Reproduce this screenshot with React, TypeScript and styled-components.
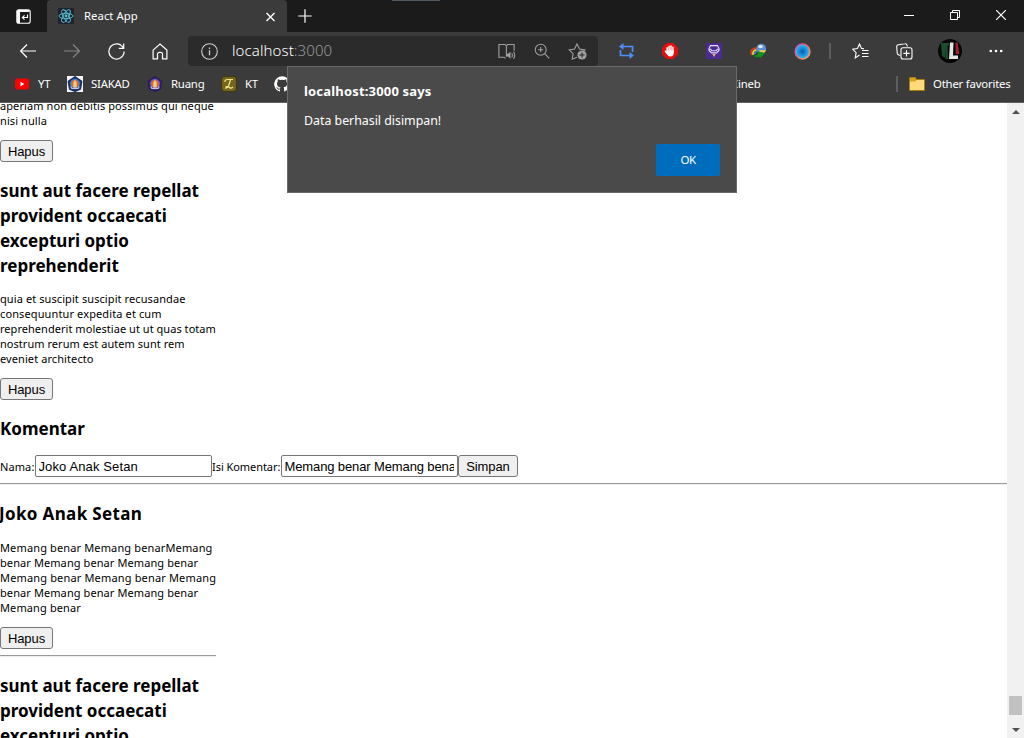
import React from 'react';
import styled, { createGlobalStyle } from 'styled-components';

const ui = '"Noto Sans", "Open Sans", sans-serif';
const control = '"Liberation Sans", Arial, sans-serif';

const GlobalStyle = createGlobalStyle`
  * { box-sizing: border-box; }
  body { margin: 0; overflow: hidden; background: #fff; }
  svg { flex: none; }
`;

const Window = styled.div`
  position: relative;
  display: flex;
  flex-direction: column;
  width: 1024px;
  height: 738px;
  overflow: hidden;
  font-family: ${ui};
`;

/* ---- title bar ---- */

const TitleBar = styled.div`
  display: flex;
  height: 32px;
  flex: none;
  background: #1b1b1b;
  color: #fff;
`;

const TabActions = styled.div`
  width: 47px;
  display: flex;
  align-items: center;
  justify-content: center;
`;

const Tab = styled.div`
  width: 240px;
  display: flex;
  align-items: center;
  padding: 0 9px 0 11px;
  background: #3b3b3b;
  border-radius: 4px 4px 0 0;
`;

const TabTitle = styled.span`
  flex: 1;
  margin-left: 10px;
  padding-bottom: 2px;
  font-size: 11.3px;
  letter-spacing: 0.05px;
`;

const NewTab = styled.div`
  width: 36px;
  display: flex;
  align-items: center;
  justify-content: center;
`;

const TitleSpace = styled.div`
  flex: 1;
  display: flex;
  padding-left: 69px;
`;

const LoadingSliver = styled.div`
  width: 48px;
  height: 1px;
  background: #4d5a62;
`;

const CaptionButton = styled.div`
  width: 46px;
  height: 29px;
  display: flex;
  align-items: center;
  justify-content: center;
`;

/* ---- toolbar ---- */

const Toolbar = styled.div`
  display: flex;
  align-items: center;
  height: 38px;
  flex: none;
  padding-left: 6px;
  background: #3b3b3b;
`;

const ToolButton = styled.div<{ $shift?: number }>`
  width: 44px;
  height: 30px;
  display: flex;
  align-items: center;
  justify-content: center;
  padding-left: ${(p) => p.$shift ?? 0}px;
`;

const AddressBar = styled.div`
  display: flex;
  align-items: center;
  width: 410px;
  height: 30px;
  margin: 0 6px;
  padding: 0 10px 0 13px;
  background: #2b2b2b;
  border-radius: 4px;
`;

const Url = styled.div`
  flex: 1;
  margin-left: 14px;
  padding-bottom: 2px;
  color: #fff;
  font-size: 15px;
  font-weight: 300;
  letter-spacing: 0.1px;
  line-height: 20px;
`;

const Port = styled.span`
  color: #9a9a9a;
`;

const AddressIcons = styled.div`
  display: flex;
  align-items: center;
  gap: 18px;
`;

const Divider = styled.div<{ $margin: string }>`
  flex: none;
  width: 2px;
  height: 16px;
  margin: ${(p) => p.$margin};
  background: #5e5e5e;
`;

/* ---- favorites bar ---- */

const FavoritesBar = styled.div`
  display: flex;
  align-items: center;
  height: 33px;
  flex: none;
  padding: 0 14px 4px;
  background: #3b3b3b;
  border-bottom: 1px solid #606060;
  color: #fff;
`;

const Favorite = styled.div<{ $width: number }>`
  flex: none;
  display: flex;
  align-items: center;
  gap: 8px;
  width: ${(p) => p.$width}px;
`;

const FavoriteName = styled.span`
  padding-bottom: 2px;
  font-size: 11.4px;
  letter-spacing: -0.22px;
  white-space: nowrap;
`;

/* ---- page ---- */

const Viewport = styled.div`
  flex: 1;
  min-height: 0;
  display: flex;
  background: #fff;
`;

const Page = styled.main`
  flex: 1;
  overflow: hidden;
  color: #000;
`;

const Post = styled.article<{ $pull?: number }>`
  width: 216px;
  margin-top: ${(p) => -(p.$pull ?? 0)}px;
`;

const Title = styled.h2<{ $gap?: number; $tracking?: number; $indent?: number }>`
  margin: 0;
  padding: 16px 0 ${(p) => p.$gap ?? 13}px;
  font-size: 17px;
  font-weight: 700;
  line-height: 25px;
  letter-spacing: ${(p) => p.$tracking ?? 0}px;
  text-indent: ${(p) => p.$indent ?? 0}px;
  white-space: nowrap;
`;

const Text = styled.p`
  margin: 0 0 12px;
  font-size: 11px;
  line-height: 15px;
`;

const Line = styled.span<{ $tracking?: number }>`
  display: block;
  white-space: nowrap;
  letter-spacing: ${(p) => p.$tracking ?? 0.09}px;
`;

const Button = styled.button<{ $width: number }>`
  display: block;
  width: ${(p) => p.$width}px;
  height: 22px;
  padding: 1px 0 0;
  border: 1px solid #767676;
  border-radius: 3px;
  background: #efefef;
  color: #000;
  font: 13px/18px ${control};
  letter-spacing: -0.1px;
`;

const Form = styled.form`
  display: flex;
  align-items: center;
  height: 22px;
`;

const Label = styled.label<{ $width: number; $tracking: number }>`
  width: ${(p) => p.$width}px;
  font-size: 11px;
  line-height: 15px;
  white-space: nowrap;
  letter-spacing: ${(p) => p.$tracking}px;
`;

const Input = styled.input<{ $tracking: number }>`
  width: 177px;
  height: 22px;
  margin: 0;
  padding: 1px 3px 1px 2.5px;
  border: 1px solid #767676;
  border-radius: 2px;
  background: #fff;
  color: #000;
  font: 13px/18px ${control};
  letter-spacing: ${(p) => p.$tracking}px;
  outline: none;
`;

const Rule = styled.hr<{ $top: number }>`
  height: 2px;
  margin: ${(p) => p.$top}px 0 0;
  border: 0;
  border-top: 1px solid #9a9a9a;
  border-bottom: 1px solid #eee;
`;

const ScrollTrack = styled.div`
  width: 17px;
  display: flex;
  flex-direction: column;
  align-items: center;
  background: #f1f1f1;
`;

const ScrollArrow = styled.div`
  height: 17px;
  display: flex;
  align-items: center;
`;

const ScrollSpace = styled.div`
  flex: 1;
`;

const ScrollThumb = styled.div`
  width: 13px;
  height: 19px;
  margin-bottom: 6px;
  background: #c1c1c1;
`;

/* ---- alert ---- */

const Dialog = styled.div`
  position: absolute;
  left: 287px;
  top: 66px;
  width: 450px;
  height: 127px;
  display: flex;
  flex-direction: column;
  padding: 14px 16px 16px;
  background: #4a4a4a;
  border: 1px solid #6a6a6a;
  color: #fff;
`;

const DialogTitle = styled.div`
  font-size: 13px;
  font-weight: 700;
  line-height: 20px;
  letter-spacing: 0.18px;
`;

const DialogText = styled.div`
  flex: 1;
  padding-top: 10px;
  font-size: 12.4px;
  line-height: 20px;
  letter-spacing: -0.02px;
`;

const DialogButton = styled.button`
  align-self: flex-end;
  width: 64px;
  height: 32px;
  padding: 0;
  border: 0;
  border-radius: 2px;
  background: #006cbe;
  color: #fff;
  font: 11.5px/32px ${ui};
  letter-spacing: -0.5px;
`;

/* ---- icons ---- */

type IconProps = { w?: number; h?: number; color?: string; sw?: number; children: React.ReactNode };
const Icon = ({ w = 16, h = 16, color = '#fff', sw = 1.1, children }: IconProps) => (
  <svg width={w} height={h} viewBox={`0 0 ${w} ${h}`} fill="none" stroke={color} strokeWidth={sw}>
    {children}
  </svg>
);

const TabActionsIcon = () => (
  <Icon w={15} h={15} sw={1.1}>
    <rect x="0.8" y="0.8" width="13.4" height="13.4" rx="2" />
    <path d="M1.5 2h12" strokeWidth="2" />
    <path d="M1 2h3v12H1z" fill="#fff" stroke="none" />
    <path d="M11.5 5.500v3H6.500M8.500 6.400L6.300 8.500l2.200 2.100" />
  </Icon>
);

const ReactIcon = () => (
  <Icon w={16} h={16} color="#58c4dc" sw={0.9}>
    <rect width="16" height="16" rx="1" fill="#20232a" stroke="none" />
    <circle cx="8" cy="8" r="1.4" fill="#58c4dc" stroke="none" />
    <ellipse cx="8" cy="8" rx="7" ry="2.7" />
    <ellipse cx="8" cy="8" rx="7" ry="2.7" transform="rotate(60 8 8)" />
    <ellipse cx="8" cy="8" rx="7" ry="2.7" transform="rotate(120 8 8)" />
  </Icon>
);

const Arrow = ({ color, flip }: { color: string; flip?: boolean }) => (
  <Icon w={16} h={14} color={color} sw={1.2}>
    <path d={flip ? 'M0 7h15.3M9 .5L15.4 7 9 13.5' : 'M16 7H.7M7 .5L.6 7 7 13.5'} />
  </Icon>
);

const Emblem = ({ boxed }: { boxed?: boolean }) => (
  <Icon>
    {boxed && <rect width="16" height="16" fill="#f4f4f4" stroke="none" />}
    <path
      d="M8 .8l6.600 4.700-1.300 7.500L8 15.300 2.700 13 1.400 5.500z"
      fill={boxed ? '#23468c' : '#43308a'}
      stroke={boxed ? '#183060' : '#2a1d5c'}
      strokeLinejoin="round"
      strokeWidth="1.6"
    />
    <circle cx="8" cy="7.800" r="4.300" fill="#e06a2c" stroke={boxed ? '#4a82c8' : '#7a5bc0'} />
    <path d="M8 3.800l1.500 2.700.3 5H6.200l.3-5z" fill="#e8cf8a" stroke="none" />
    <path d="M3.800 10.500l1 2h6.400l1-2" stroke="#c8c4dc" />
  </Icon>
);

export default function App() {
  return (
    <Window>
      <GlobalStyle />
      <TitleBar>
        <TabActions><TabActionsIcon /></TabActions>
        <Tab>
          <ReactIcon />
          <TabTitle>React App</TabTitle>
          <Icon w={15} h={15} sw={1.4}><path d="M3.5 4l8 8M11.5 4l-8 8" /></Icon>
        </Tab>
        <NewTab><Icon w={14} h={14} sw={1.2}><path d="M7 .3v13.4M.3 7h13.4" /></Icon></NewTab>
        <TitleSpace><LoadingSliver /></TitleSpace>
        <CaptionButton><Icon w={10} h={10} sw={1}><path d="M0 5.5h10" /></Icon></CaptionButton>
        <CaptionButton>
          <Icon w={10} h={10} sw={1}><path d="M.5 2.5h7v7h-7zM2.5 2.5v-2h7v7h-2" /></Icon>
        </CaptionButton>
        <CaptionButton><Icon w={10} h={10} sw={1.2}><path d="M0 0l10 10M10 0L0 10" /></Icon></CaptionButton>
      </TitleBar>

      <Toolbar>
        <ToolButton><Arrow color="#fff" /></ToolButton>
        <ToolButton><Arrow color="#858585" flip /></ToolButton>
        <ToolButton>
          <Icon w={17} h={17} sw={1.2}>
            <path d="M15.3 5A7.6 7.6 0 1 0 16.1 8.5M15.7 .5v4.9h-4.9" />
          </Icon>
        </ToolButton>
        <ToolButton>
          <Icon w={16} h={17} sw={1.2}>
            <path d="M1.100 7.100L8 1l6.900 6.100v8.800h-4.400v-4.600a2 2 0 0 0-2-2h-1a2 2 0 0 0-2 2v4.600H1.100z" />
          </Icon>
        </ToolButton>
        <AddressBar>
          <Icon w={17} h={17} color="#d0d0d0">
            <circle cx="8.5" cy="8.5" r="7.8" />
            <path d="M8.5 7.3v5M8.5 4.4v1.5" strokeWidth="1.3" />
          </Icon>
          <Url>localhost<Port>:3000</Port></Url>
          <AddressIcons>
            <Icon w={18} h={17} color="#a0a0a0">
              <path d="M7.500 15.300L6 14.300H.9V1.500h6.200L8.400 3v10.500M8.400 3l1.300-1.500h6.400v6.200" />
              <path d="M8 10.800h2l2.500-2.100v7L10 13.500H8z" fill="#a0a0a0" stroke="none" />
              <path d="M13.800 10.200q1.200 2 0 4M15.600 8.700q2.200 3.500 0 7" />
            </Icon>
            <Icon w={16} h={16} color="#a0a0a0">
              <circle cx="6.7" cy="6.7" r="5.5" />
              <path d="M10.600 10.600l4.700 4.700M6.700 4.100v5.200M4.100 6.700h5.200" />
            </Icon>
            <Icon w={20} h={18} color="#a0a0a0">
              <path d="M9 15.200l-4.800 2 .9-5.500-4-3.800 5.400-.8L9 2l2.500 5.100 5.400.8-1.200 1.200" />
              <circle cx="14" cy="13" r="4.6" fill="#a0a0a0" stroke="none" />
              <path d="M14 10.400v5.200M11.400 13h5.200" stroke="#2b2b2b" />
            </Icon>
          </AddressIcons>
        </AddressBar>

        <ToolButton>
          <Icon w={15} h={16} color="#4a90f5" sw={1.7}>
            <path d="M3 3.500h10.500v5.500M12 12.500H1.500V7" />
            <path d="M0 3.500L4.500 0v7zM15 12.500L10.500 9v7z" fill="#4a90f5" stroke="none" />
          </Icon>
        </ToolButton>
        <ToolButton>
          <Icon>
            <path d="M4.7 0h6.6L16 4.7v6.6L11.3 16H4.7L0 11.3V4.7z" fill="#e60f0f" stroke="none" />
            <path d="M5.2 9V4.800M7.100 8V3.200M9 8V3M10.900 9V4.300M4.800 10l-1.300-1.800" stroke="#fff" strokeWidth="1.5" strokeLinecap="round" />
            <path d="M4.500 7.500h7.200v2.700c0 2-1.300 3.300-3.500 3.300-2 0-3-1.500-3.700-3z" fill="#fff" stroke="none" />
          </Icon>
        </ToolButton>
        <ToolButton>
          <Icon w={16} h={16} color="#e8e0f5" sw={1.1}>
            <rect width="16" height="16" fill="#4b2b91" stroke="none" />
            <path d="M4.500 2.600h7l1.500 3v1.800l-2.500 2.500h-5L3 7.400V5.600zM3.200 6.200h1.600l1 1.500h4.400l1-1.500h1.600" />
            <path d="M6.300 10.900h3.400L8 14z" fill="#eeb070" stroke="none" />
          </Icon>
        </ToolButton>
        <ToolButton>
          <Icon w={17} h={16}>
            <path d="M1.500 12Q0 5.500 5.500 5.200q3 0 4.500 2" stroke="#d83a25" strokeWidth="1.800" />
            <path d="M3 12Q2.500 7 6.500 7" stroke="#efd229" strokeWidth="1.800" />
            <path d="M4.500 11.500q0-2.500 3-3" stroke="#3f8ee0" strokeWidth="1.300" />
            <circle cx="11.300" cy="5.700" r="4.900" fill="#5c8fdc" stroke="none" />
            <ellipse cx="10.500" cy="3.600" rx="2.400" ry="1.700" fill="#dceaff" stroke="none" />
            <path d="M9 7.300l7-.3-1.300 2.500-4 1z" fill="#d8cf4a" stroke="none" />
            <path d="M2.800 12q3.500 1 5.200-1L6.500 8.800l8.700 1.500-5 5-.8-1.300q-4.400 1.500-6.600-2z" fill="#15921c" stroke="#0a5a10" strokeWidth=".5" />
          </Icon>
        </ToolButton>
        <ToolButton>
          <Icon w={17} h={17}>
            <defs>
              <linearGradient id="ring" x1="0" y1="0" x2="1" y2="1">
                <stop offset="0" stopColor="#a65bd8" />
                <stop offset=".5" stopColor="#f0685a" />
                <stop offset="1" stopColor="#f7b267" />
              </linearGradient>
              <radialGradient id="lens">
                <stop offset="0" stopColor="#0a5aa5" />
                <stop offset=".35" stopColor="#1280d0" />
                <stop offset="1" stopColor="#3bbcfa" />
              </radialGradient>
            </defs>
            <circle cx="8.500" cy="8.500" r="7.400" fill="url(#lens)" stroke="url(#ring)" strokeWidth="1.500" />
          </Icon>
        </ToolButton>
        <Divider $margin="0 7px 0 5px" />
        <ToolButton>
          <Icon w={17} h={16}>
            <path d="M7.500 12l-4.200 2.900.8-5.200L.8 6.300l4.600-.7L7.500 1l2 4.400 2.500.4M10 7.500h6.500M10 10.500h6.500M10 13.500h6.500" />
          </Icon>
        </ToolButton>
        <ToolButton>
          <Icon w={17} h={17}>
            <path d="M4 12.500l-1.500-.7a2 2 0 0 1-1.300-2L.7 4a2 2 0 0 1 1.700-2.300L8.800.8a2 2 0 0 1 2.300 1.500l.2 1.200" />
            <rect x="5" y="4.800" width="11" height="11.200" rx="2" />
            <path d="M10.500 7.300v6.200M7.400 10.400h6.200" />
          </Icon>
        </ToolButton>
        <ToolButton $shift={4}>
          <svg width="24" height="24" viewBox="0 0 24 24">
            <circle cx="12" cy="12" r="12" fill="#050505" />
            <path d="M3 4h8v2.500H9.500L10 20H7.500L7 8v11L4 17z" fill="#1a4f2e" />
            <path d="M12 3.500h3.500L15 16.500h5v3.500h-9z" fill="#e4e4e4" />
            <path d="M17.500 3.500h2.200l1.500 11.500h-3.500z" fill="#a3222a" />
          </svg>
        </ToolButton>
        <ToolButton $shift={8}>
          <Icon w={14} h={4} color="none">
            <g fill="#fff">
              <circle cx="1.800" cy="2" r="1.300" />
              <circle cx="7" cy="2" r="1.300" />
              <circle cx="12.200" cy="2" r="1.300" />
            </g>
          </Icon>
        </ToolButton>
      </Toolbar>

      <FavoritesBar>
        <Favorite $width={53}>
          <Icon>
            <rect x="1" y="2.500" width="14" height="11" rx="2.500" fill="#f00" stroke="none" />
            <path d="M6.500 5.800v4.600L10.300 8z" fill="#fff" stroke="none" />
          </Icon>
          <FavoriteName>YT</FavoriteName>
        </Favorite>
        <Favorite $width={80}><Emblem boxed /><FavoriteName>SIAKAD</FavoriteName></Favorite>
        <Favorite $width={74}><Emblem /><FavoriteName>Ruang</FavoriteName></Favorite>
        <Favorite $width={53}>
          <Icon>
            <rect x=".5" y=".5" width="15" height="15" rx="3" fill="#74661c" stroke="#3f380d" />
            <path d="M4 6q-.5-2.500 2.500-2.500h5.500M9.500 3.800L7.500 10q-1 2.500-3.500 2M4.500 10.800q2.500-.8 4 .7t3.500-.5" stroke="#f3e58a" strokeWidth="1.200" />
          </Icon>
          <FavoriteName>KT</FavoriteName>
        </Favorite>
        <Favorite $width={457}>
          <Icon>
            <path d="M8 .3a7.800 7.800 0 0 0-2.500 15.200c.4.100.5-.2.500-.4v-1.500c-2.200.5-2.700-1-2.700-1-.3-.9-.8-1.100-.8-1.100-.8-.5 0-.5 0-.5.8.1 1.200.8 1.200.8.700 1.300 1.900.9 2.400.700 0-.5.3-.9.500-1.100-1.800-.2-3.600-.9-3.600-3.900 0-.9.300-1.600.8-2.100-.1-.2-.3-1 .1-2.100 0 0 .7-.2 2.200.8a7.500 7.500 0 0 1 3.900 0c1.500-1 2.200-.8 2.200-.8.400 1.100.2 1.900.1 2.100.5.500.8 1.200.8 2.100 0 3-1.800 3.700-3.600 3.900.3.300.6.700.6 1.500v2.200c0 .2.100.5.500.4A7.800 7.800 0 0 0 8 .3z" fill="#fff" stroke="none" />
          </Icon>
        </Favorite>
        <Favorite $width={164}><FavoriteName>Cineb</FavoriteName></Favorite>
        <Divider $margin="0 11px 0 1px" />
        <Favorite $width={102}>
          <Icon>
            <path d="M.5 2.500q0-1 1-1h4.500l1.500 2h7q1 0 1 1v9q0 1-1 1h-13q-1 0-1-1z" fill="#d9a520" stroke="#a87c12" />
            <path d="M1 5.500h5.500l1.200-1.500H15v10H1z" fill="#ffdb7d" stroke="none" />
          </Icon>
          <FavoriteName>Other favorites</FavoriteName>
        </Favorite>
      </FavoritesBar>

      <Viewport>
        <Page>
          <Post $pull={5}>
            <Text>
              <Line>aperiam non debitis possimus qui neque</Line>
              <Line>nisi nulla</Line>
            </Text>
            <Button $width={53}>Hapus</Button>
          </Post>
          <Post>
            <Title>
              sunt aut facere repellat<br />provident occaecati<br />excepturi optio<br />reprehenderit
            </Title>
            <Text>
              <Line>quia et suscipit suscipit recusandae</Line>
              <Line $tracking={0.12}>consequuntur expedita et cum</Line>
              <Line $tracking={0.04}>reprehenderit molestiae ut ut quas totam</Line>
              <Line $tracking={0.04}>nostrum rerum est autem sunt rem</Line>
              <Line>eveniet architecto</Line>
            </Text>
            <Button $width={53}>Hapus</Button>
          </Post>
          <Title $gap={14}>Komentar</Title>
          <Form>
            <Label $width={35} $tracking={0.1}>Nama:</Label>
            <Input $tracking={0.12} defaultValue="Joko Anak Setan" />
            <Label $width={69} $tracking={-0.06}>Isi Komentar:</Label>
            <Input $tracking={-0.12} defaultValue="Memang benar Memang benar" />
            <Button type="button" $width={60}>Simpan</Button>
          </Form>
          <Rule $top={6} />
          <Post>
            <Title $gap={14} $tracking={0.35} $indent={-1}>Joko Anak Setan</Title>
            <Text>
              <Line $tracking={0.14}>Memang benar Memang benarMemang</Line>
              <Line>benar Memang benar Memang benar</Line>
              <Line $tracking={0.16}>Memang benar Memang benar Memang</Line>
              <Line>benar Memang benar Memang benar</Line>
              <Line $tracking={0.12}>Memang benar</Line>
            </Text>
            <Button $width={53}>Hapus</Button>
            <Rule $top={6} />
          </Post>
          <Post>
            <Title>
              sunt aut facere repellat<br />provident occaecati<br />excepturi optio<br />reprehenderit
            </Title>
          </Post>
        </Page>
        <ScrollTrack>
          <ScrollArrow>
            <Icon w={8} h={4} color="none"><path d="M0 4h8L4 0z" fill="#505050" /></Icon>
          </ScrollArrow>
          <ScrollSpace />
          <ScrollThumb />
          <ScrollArrow>
            <Icon w={8} h={4} color="none"><path d="M0 0h8L4 4z" fill="#505050" /></Icon>
          </ScrollArrow>
        </ScrollTrack>
      </Viewport>

      <Dialog>
        <DialogTitle>localhost:3000 says</DialogTitle>
        <DialogText>Data berhasil disimpan!</DialogText>
        <DialogButton>OK</DialogButton>
      </Dialog>
    </Window>
  );
}
